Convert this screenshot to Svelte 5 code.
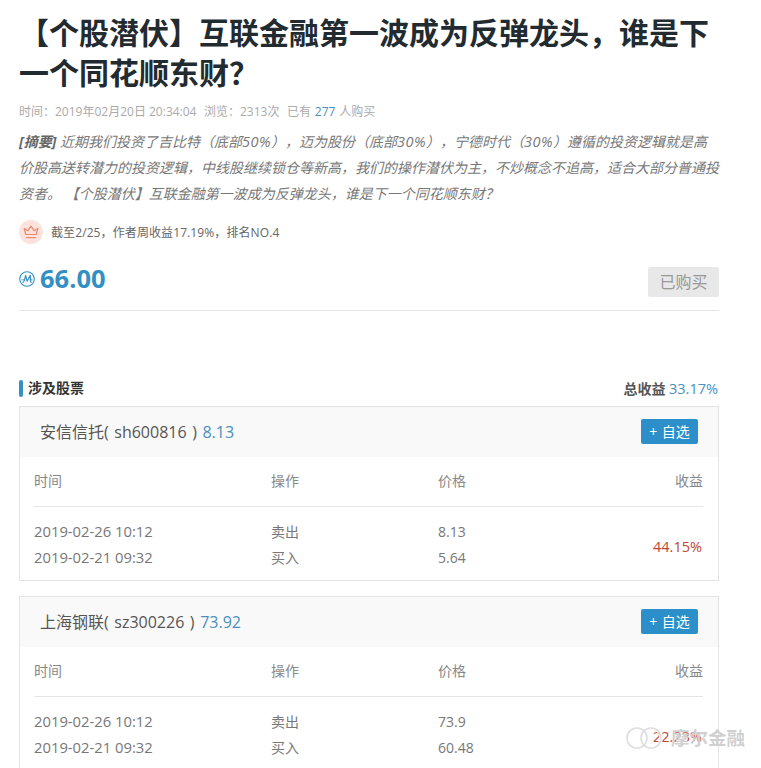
<script>
	const stocks = [
		{
			name: '安信信托',
			code: 'sh600816',
			price: '8.13',
			profit: '44.15%',
			rows: [
				{ time: '2019-02-26 10:12', op: '卖出', price: '8.13' },
				{ time: '2019-02-21 09:32', op: '买入', price: '5.64' }
			]
		},
		{
			name: '上海钢联',
			code: 'sz300226',
			price: '73.92',
			profit: '22.23%',
			rows: [
				{ time: '2019-02-26 10:12', op: '卖出', price: '73.9' },
				{ time: '2019-02-21 09:32', op: '买入', price: '60.48' }
			]
		}
	];
</script>

<div class="page">
	<h1>【个股潜伏】互联金融第一波成为反弹龙头，谁是下一个同花顺东财？</h1>

	<div class="meta">
		<span>时间：2019年02月20日 20:34:04</span>
		<span>浏览：2313次</span>
		<span class="buyers">已有 <em>277</em> 人购买</span>
	</div>

	<p class="summary">
		<b>[摘要]</b> 近期我们投资了吉比特（底部<span class="pct">50%</span>），迈为股份（底部<span class="pct">30%</span>），宁德时代（<span class="pct">30%</span>）遵循的投资逻辑就是高价股高送转潜力的投资逻辑，中线股继续锁仓等新高，我们的操作潜伏为主，不炒概念不追高，适合大部分普通投资者。 【个股潜伏】互联金融第一波成为反弹龙头，谁是下一个同花顺东财？
	</p>

	<div class="rank">
		<span class="crown">
			<svg width="16" height="14" viewBox="0 0 16 14" fill="none" stroke="#ec8a6e" stroke-width="1.2">
				<path d="M2.8 9.5 1.2 3.6l3.6 2.2L8 1.2l3.2 4.6 3.6-2.2-1.6 5.9z" stroke-linejoin="round" />
				<path d="M3 12.6h10" />
			</svg>
		</span>
		<span class="rank-text">截至2/25，作者周收益17.19%，排名NO.4</span>
	</div>

	<div class="buy">
		<div class="amount">
			<svg width="16" height="16" viewBox="0 0 16 16" fill="none" stroke="#338fc4">
				<circle cx="8" cy="8" r="7.3" stroke-width="1.1" />
				<path d="M3.4 11.6c1-.1 1.5-.8 2-2.2L6.6 4.4l1.5 5.8 3.2-5.8.2 5.6c0 .9.3 1.3 1.1 1.6" stroke-width="1.2" stroke-linejoin="round" />
				<path d="M2.4 8.8h2.8M10.8 8.8h2.8" stroke-width="0.8" />
			</svg>
			<span>66.00</span>
		</div>
		<span class="bought">已购买</span>
	</div>

	<div class="section-head">
		<h2>涉及股票</h2>
		<div class="total"><b>总收益</b> <em>33.17%</em></div>
	</div>

	{#each stocks as stock}
		<section class="card">
			<header>
				<div class="stock-name">{stock.name}( {stock.code} ) <em>{stock.price}</em></div>
				<span class="add">+ 自选</span>
			</header>
			<div class="table">
				<div class="row head">
					<span>时间</span>
					<span>操作</span>
					<span>价格</span>
					<span class="right">收益</span>
				</div>
				<div class="body">
					<div class="lines">
						{#each stock.rows as row}
							<div class="row line">
								<span class="time">{row.time}</span>
								<span>{row.op}</span>
								<span>{row.price}</span>
							</div>
						{/each}
					</div>
					<span class="profit">{stock.profit}</span>
				</div>
			</div>
		</section>
	{/each}

	<div class="watermark">
		<svg width="40" height="26" viewBox="0 0 40 26" fill="none">
			<g stroke="#fff" stroke-width="4" opacity="0.7">
				<circle cx="13" cy="13" r="10" />
				<circle cx="27" cy="13" r="10" />
			</g>
			<g stroke="#dedede" stroke-width="1.6">
				<circle cx="13" cy="13" r="10" />
				<circle cx="27" cy="13" r="10" />
			</g>
		</svg>
		<span>摩尔金融</span>
	</div>
</div>

<style>
	:global(body) {
		background: #fff;
		overflow: hidden;
	}

	.page {
		position: relative;
		box-sizing: border-box;
		width: 761px;
		height: 768px;
		overflow: hidden;
		padding: 13px 42px 0 19px;
		color: #555;
		font-family: 'Open Sans', 'Noto Sans CJK SC', sans-serif;
		font-size: 14px;
		text-spacing-trim: space-all;
	}

	em {
		font-style: normal;
		color: #4a8fc0;
	}

	h1 {
		margin: 0;
		color: #222b30;
		font-size: 30px;
		font-weight: 700;
		line-height: 40px;
	}

	.meta {
		display: flex;
		gap: 7.5px;
		margin-top: 9px;
		color: #aaa;
		font-size: 12px;
		line-height: 20px;
	}

	.buyers {
		word-spacing: 0.8px;
	}

	.summary {
		margin: 7px 0 0;
		color: #777;
		font-size: 14px;
		font-style: italic;
		line-height: 26px;
	}

	.summary b {
		color: #666;
	}

	.pct {
		font-size: 14.5px;
		letter-spacing: 0.5px;
		line-height: 1;
	}

	.rank {
		display: flex;
		align-items: center;
		gap: 8px;
		margin-top: 13px;
		color: #666;
		font-size: 12px;
	}

	.rank-text {
		letter-spacing: 0.1px;
	}

	.crown {
		display: flex;
		align-items: center;
		justify-content: center;
		width: 24px;
		height: 24px;
		border-radius: 50%;
		background: #fde3dc;
	}

	.buy {
		display: flex;
		justify-content: space-between;
		align-items: center;
		height: 41px;
		margin-top: 2px;
		padding: 15px 0 8px;
		border-bottom: 1px solid #e5e5e5;
	}

	.amount {
		display: flex;
		align-items: center;
		gap: 5px;
		margin-top: -8px;
		color: #338fc4;
		font-size: 25.5px;
		font-weight: 700;
		line-height: 34px;
	}

	.amount svg {
		margin-top: 2px;
	}

	.bought {
		width: 71px;
		height: 30px;
		border-radius: 2px;
		background: #e8e8e8;
		color: #999;
		font-size: 16px;
		line-height: 30px;
		text-align: center;
	}

	.section-head {
		display: flex;
		justify-content: space-between;
		align-items: center;
		height: 20px;
		margin-top: 67px;
	}

	h2 {
		position: relative;
		margin: 0;
		padding-left: 9px;
		color: #333;
		font-size: 14px;
		font-weight: 700;
		line-height: 16px;
	}

	h2::before {
		content: '';
		position: absolute;
		left: 0;
		top: 0;
		width: 4px;
		height: 17px;
		border-radius: 2px;
		background: #338fc4;
	}

	.total {
		margin-right: 1px;
		font-size: 14px;
	}

	.total em {
		font-size: 14.5px;
	}

	.card {
		margin-top: 8px;
		margin-bottom: 15px;
		border: 1px solid #e3e3e3;
	}

	header {
		box-sizing: border-box;
		display: flex;
		justify-content: space-between;
		align-items: center;
		height: 50px;
		padding: 0 20px 2px;
		background: #f9f9f9;
	}

	.stock-name {
		color: #555;
		font-size: 16px;
		word-spacing: 1.4px;
	}

	.add {
		width: 57px;
		height: 25px;
		border-radius: 2px;
		background: #2d8fc9;
		color: #fff;
		font-size: 14px;
		line-height: 25px;
		text-align: center;
		word-spacing: 1px;
	}

	.table {
		padding: 0 15px 0 14px;
	}

	.row {
		display: grid;
		grid-template-columns: 237px 167px 1fr;
		align-items: center;
	}

	.head {
		box-sizing: border-box;
		grid-template-columns: 237px 167px 1fr 1fr;
		height: 50px;
		padding-bottom: 4px;
		border-bottom: 1px solid #e5e5e5;
		color: #888;
		font-size: 14px;
	}

	.right {
		text-align: right;
	}

	.body {
		display: flex;
		align-items: center;
		justify-content: space-between;
		padding: 11px 0 10px;
	}

	.lines {
		flex: 1;
	}

	.line {
		height: 26px;
		color: #777;
		font-size: 14px;
	}

	.time {
		font-size: 14.8px;
	}

	.profit {
		margin-right: 1px;
		padding-top: 4px;
		color: #c0452f;
		font-size: 14.5px;
	}

	.watermark {
		position: absolute;
		left: 624px;
		top: 725px;
		display: flex;
		align-items: center;
		gap: 7px;
		color: rgba(200, 200, 200, 0.85);
		font-size: 18.5px;
		font-weight: 700;
		line-height: 26px;
		text-shadow: 0 0 1px rgba(255, 255, 255, 0.8);
	}
</style>
